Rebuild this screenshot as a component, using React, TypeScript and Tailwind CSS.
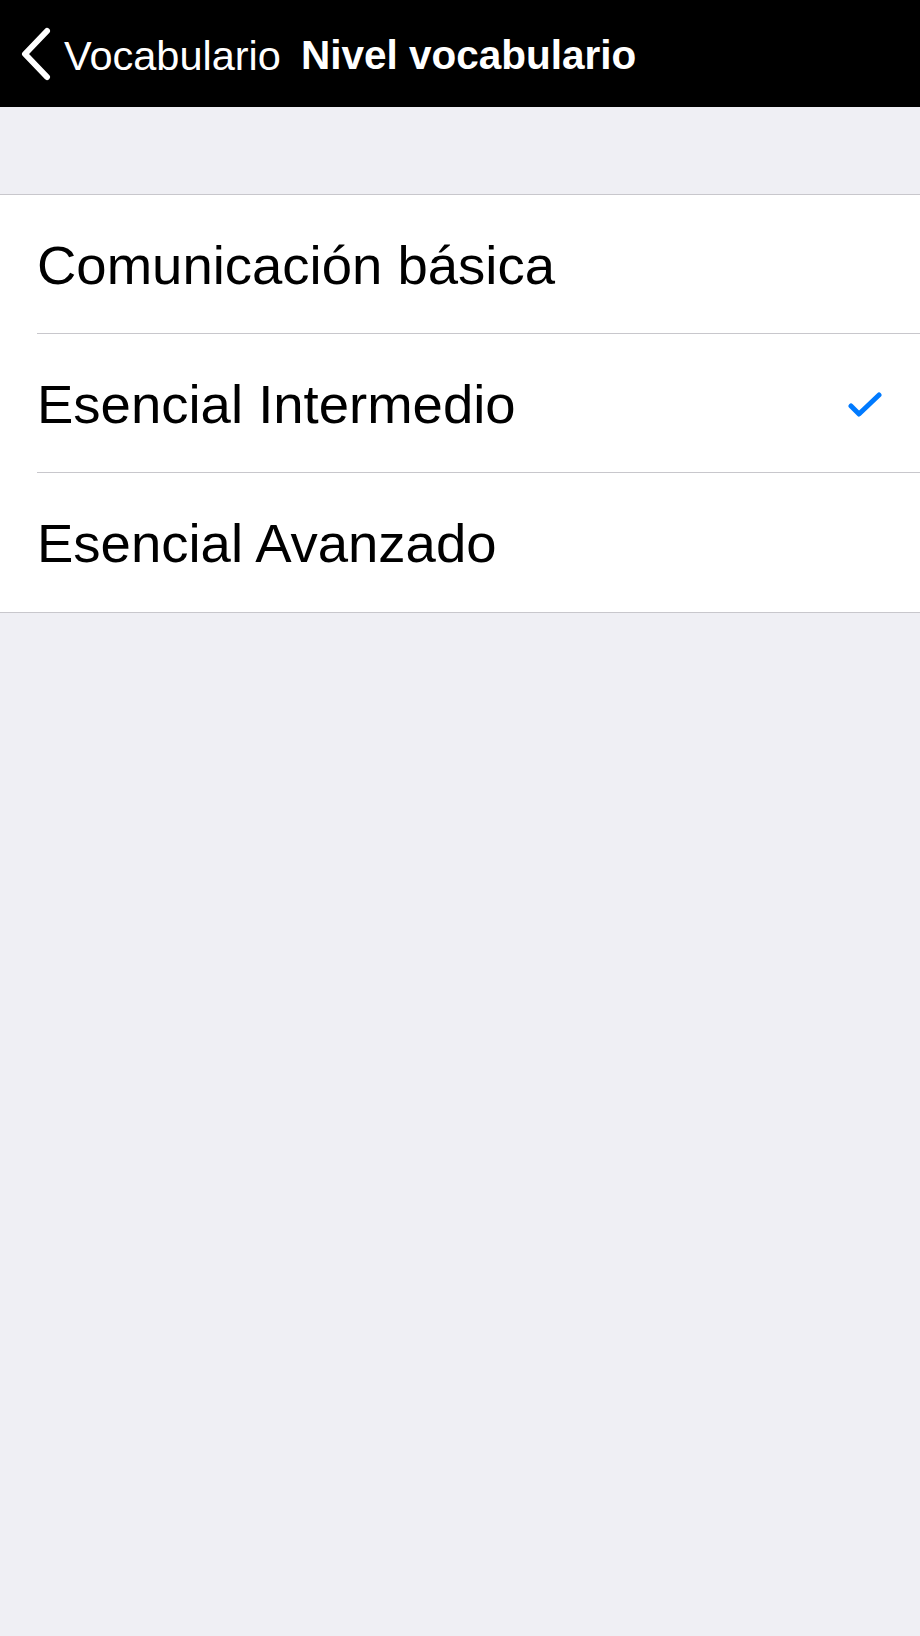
import React from 'react';

const levels = [
  { id: 1, name: 'Comunicación básica' },
  { id: 2, name: 'Esencial Intermedio' },
  { id: 3, name: 'Esencial Avanzado' },
];

const App = () => {
  const [selected, setSelected] = React.useState(2);

  return (
    <div className="min-h-[1636px] bg-[#efeff4] font-['Liberation_Sans',Arial,sans-serif]">
      <header className="h-[107px] bg-black flex items-center pt-[4px] text-white">
        <button className="flex items-center pl-[20px] h-full">
          <svg width="32" height="54" viewBox="0 0 32 54" className="shrink-0 -mt-[4px]">
            <polyline
              points="27,4 5,27 27,50"
              fill="none"
              stroke="white"
              strokeWidth="6"
              strokeLinecap="round"
              strokeLinejoin="round"
            />
          </svg>
          <span className="ml-[12px] text-[41.5px] leading-none">Vocabulario</span>
        </button>
        <h1 className="ml-[20px] text-[40.5px] font-bold leading-none">Nivel vocabulario</h1>
      </header>

      <div className="h-[87px]" />

      <ul className="bg-white border-y border-[#c8c7cc]">
        {levels.map((lvl, i) => (
          <li key={lvl.id} className="pl-[37px]" onClick={() => setSelected(lvl.id)}>
            <div
              className={`h-[139px] flex items-center justify-between pr-[38px] ${
                i < levels.length - 1 ? 'border-b border-[#c8c7cc]' : ''
              }`}
            >
              <span className="pt-[4px] text-[54.5px] text-black leading-none">{lvl.name}</span>
              {selected === lvl.id && (
                <svg width="34" height="26" viewBox="0 0 34 26" className="mt-[4px]">
                  <polyline
                    points="3,14 11,22 31,3"
                    fill="none"
                    stroke="#007aff"
                    strokeWidth="5"
                    strokeLinecap="round"
                    strokeLinejoin="round"
                  />
                </svg>
              )}
            </div>
          </li>
        ))}
      </ul>
    </div>
  );
};

export default App;
